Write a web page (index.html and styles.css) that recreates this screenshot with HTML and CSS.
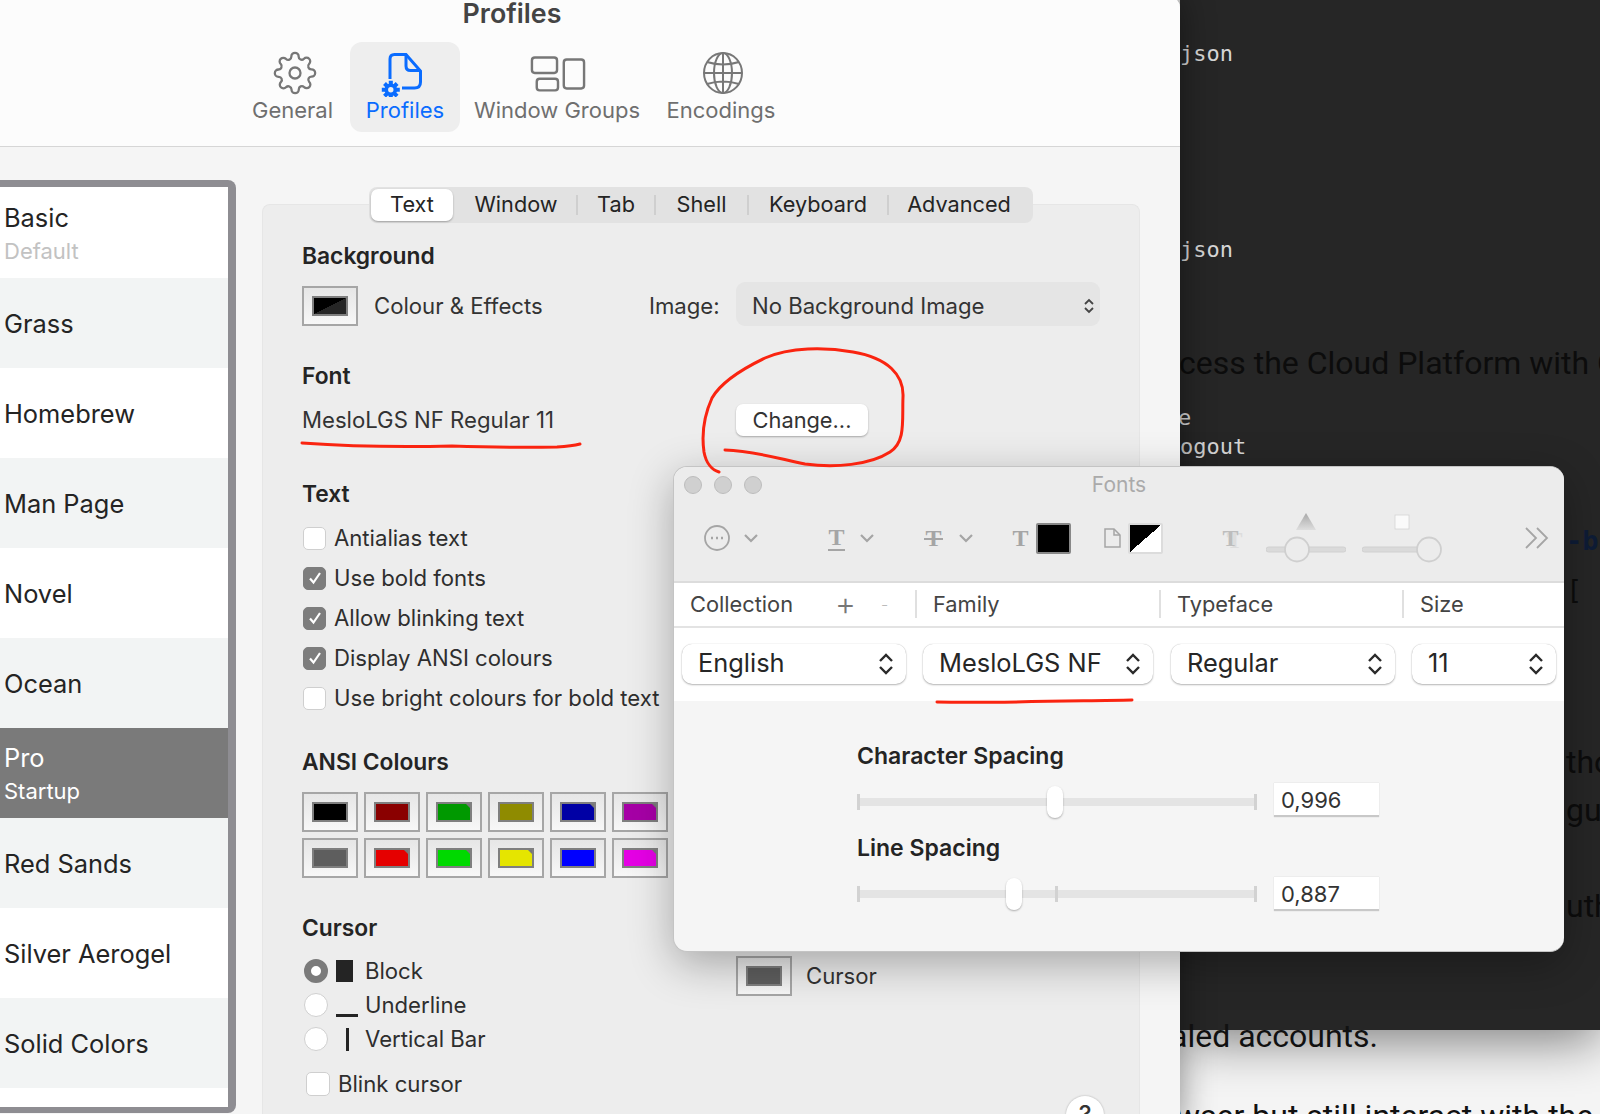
FILE: index.html
```html
<!DOCTYPE html>
<html lang="en">
<head>
  <meta charset="UTF-8">
  <title>Terminal Preferences - Profiles</title>
  <link rel="stylesheet" href="styles.css">
</head>
<body>
  <div class="desktop">
    <!-- terminal behind the windows -->
    <div class="term">
      <div class="term-line line-json1">json</div>
      <div class="term-line line-json2">json</div>
      <div class="term-line line-e">e</div>
      <div class="term-line line-logout">ogout</div>
    </div>

    <!-- page text around the terminal -->
    <div class="doc doc-access">cess the Cloud Platform with G</div>
    <div class="doc doc-tho">tho</div>
    <div class="doc doc-gu">gu</div>
    <div class="doc doc-uth">uth</div>
    <div class="doc doc-br">-br</div>
    <div class="doc doc-bracket">[ -</div>
    <div class="doc doc-sealed">aled accounts.</div>
    <div class="doc doc-power">wser but still interact with the</div>

    <!-- preferences window -->
    <div class="prefs">
      <header class="prefs-top">
        <div class="prefs-title">Profiles</div>
        <nav class="prefs-tools">
          <div class="tool tool-general">
            <svg class="tool-icon" width="44" height="44" viewBox="0 0 24 24" fill="none" stroke="#777" stroke-width="1.25">
              <circle cx="12" cy="12" r="3"/>
              <path d="M19.4 15a1.65 1.65 0 0 0 .33 1.82l.06.06a2 2 0 0 1 0 2.83 2 2 0 0 1-2.83 0l-.06-.06a1.65 1.65 0 0 0-1.82-.33 1.65 1.65 0 0 0-1 1.51V21a2 2 0 0 1-2 2 2 2 0 0 1-2-2v-.09A1.65 1.65 0 0 0 9 19.4a1.65 1.65 0 0 0-1.82.33l-.06.06a2 2 0 0 1-2.83 0 2 2 0 0 1 0-2.83l.06-.06a1.65 1.65 0 0 0 .33-1.82 1.65 1.65 0 0 0-1.51-1H3a2 2 0 0 1-2-2 2 2 0 0 1 2-2h.09A1.65 1.65 0 0 0 4.6 9a1.65 1.65 0 0 0-.33-1.82l-.06-.06a2 2 0 0 1 0-2.83 2 2 0 0 1 2.83 0l.06.06a1.65 1.65 0 0 0 1.82.33H9a1.65 1.65 0 0 0 1-1.51V3a2 2 0 0 1 2-2 2 2 0 0 1 2 2v.09a1.65 1.65 0 0 0 1 1.51 1.65 1.65 0 0 0 1.82-.33l.06-.06a2 2 0 0 1 2.83 0 2 2 0 0 1 0 2.83l-.06.06a1.65 1.65 0 0 0-.33 1.82V9a1.65 1.65 0 0 0 1.51 1H21a2 2 0 0 1 2 2 2 2 0 0 1-2 2h-.09a1.65 1.65 0 0 0-1.51 1z"/>
            </svg>
            <span>General</span>
          </div>
          <div class="tool tool-profiles active">
            <svg class="tool-icon" width="48" height="48" viewBox="0 0 48 48" fill="none">
              <path d="M12 30V10q0-4.5 4.500-4.500H28L42.500 22V33q0 6-6 6H24" stroke="#0a6cff" stroke-width="3"/>
              <path d="M28 5.500V17q0 4.500 4.500 4.500H42.500" stroke="#0a6cff" stroke-width="3"/>
              <g transform="translate(2,30) scale(.9)">
                <path d="M12 2v20M2 12h20M5 5l14 14M19 5L5 19" stroke="#0a6cff" stroke-width="4.500"/>
                <circle cx="12" cy="12" r="7" fill="#0a6cff"/>
                <circle cx="12" cy="12" r="3" fill="#eee"/>
              </g>
            </svg>
            <span>Profiles</span>
          </div>
          <div class="tool tool-groups">
            <svg class="tool-icon" width="58" height="48" viewBox="0 0 58 48" fill="none" stroke="#777" stroke-width="2.500">
              <rect x="2" y="8" width="26" height="16" rx="3"/>
              <rect x="7" y="30" width="22" height="12" rx="3"/>
              <rect x="35" y="10" width="21" height="30" rx="3"/>
            </svg>
            <span>Window Groups</span>
          </div>
          <div class="tool tool-encodings">
            <svg class="tool-icon" width="42" height="44" viewBox="0 0 42 44" fill="none" stroke="#777" stroke-width="2">
              <ellipse cx="21" cy="22" rx="19" ry="20"/>
              <ellipse cx="21" cy="22" rx="9" ry="20"/>
              <path d="M21 2v40M2 22h38M5 11q16 5 32 0M5 33q16-5 32 0"/>
            </svg>
            <span>Encodings</span>
          </div>
        </nav>
      </header>

      <div class="prefs-body">
        <ul class="profile-list">
          <li><span class="p-name">Basic</span><span class="p-sub">Default</span></li>
          <li><span class="p-name">Grass</span></li>
          <li><span class="p-name">Homebrew</span></li>
          <li><span class="p-name">Man Page</span></li>
          <li><span class="p-name">Novel</span></li>
          <li><span class="p-name">Ocean</span></li>
          <li class="selected"><span class="p-name">Pro</span><span class="p-sub">Startup</span></li>
          <li><span class="p-name">Red Sands</span></li>
          <li><span class="p-name">Silver Aerogel</span></li>
          <li><span class="p-name">Solid Colors</span></li>
          <li></li>
        </ul>

        <div class="settings">
          <div class="tabs">
            <span class="tab tab-text current">Text</span>
            <span class="tab tab-window">Window</span>
            <span class="tab-sep"></span>
            <span class="tab tab-tab">Tab</span>
            <span class="tab-sep"></span>
            <span class="tab tab-shell">Shell</span>
            <span class="tab-sep"></span>
            <span class="tab tab-keyboard">Keyboard</span>
            <span class="tab-sep"></span>
            <span class="tab tab-advanced">Advanced</span>
          </div>

          <div class="group">
            <h4>Background</h4>
            <div class="row row-bg">
              <div class="well"><div class="well-in bg-swatch"></div></div>
              <span class="well-label">Colour &amp; Effects</span>
              <span class="image-label">Image:</span>
              <div class="select-flat">
                No Background Image
                <svg class="updown" width="12" height="18" viewBox="0 0 12 18" fill="none" stroke="#444" stroke-width="1.800"><path d="M2 7l4-4 4 4M2 11l4 4 4-4"/></svg>
              </div>
            </div>

            <h4 class="h-font">Font</h4>
            <div class="row row-font">
              <span class="font-name">MesloLGS NF Regular 11</span>
              <button class="btn-change">Change...</button>
            </div>

            <h4 class="h-text">Text</h4>
            <div class="checks">
              <label class="check"><i class="box"></i>Antialias text</label>
              <label class="check"><i class="box on"><svg width="16" height="16" viewBox="0 0 16 16" fill="none" stroke="#fff" stroke-width="2.200"><path d="M3 8.500l3.500 4L13 3"/></svg></i>Use bold fonts</label>
              <label class="check"><i class="box on"><svg width="16" height="16" viewBox="0 0 16 16" fill="none" stroke="#fff" stroke-width="2.200"><path d="M3 8.500l3.500 4L13 3"/></svg></i>Allow blinking text</label>
              <label class="check"><i class="box on"><svg width="16" height="16" viewBox="0 0 16 16" fill="none" stroke="#fff" stroke-width="2.200"><path d="M3 8.500l3.500 4L13 3"/></svg></i>Display ANSI colours</label>
              <label class="check"><i class="box"></i>Use bright colours for bold text</label>
            </div>

            <h4 class="h-ansi">ANSI Colours</h4>
            <div class="ansi">
              <div class="well"><div class="well-in c-black"></div></div>
              <div class="well"><div class="well-in c-maroon"></div></div>
              <div class="well"><div class="well-in c-green notch"></div></div>
              <div class="well"><div class="well-in c-olive"></div></div>
              <div class="well"><div class="well-in c-navy notch"></div></div>
              <div class="well"><div class="well-in c-purple notch"></div></div>
              <div class="well"><div class="well-in c-grey"></div></div>
              <div class="well"><div class="well-in c-red notch"></div></div>
              <div class="well"><div class="well-in c-lime notch"></div></div>
              <div class="well"><div class="well-in c-yellow notch"></div></div>
              <div class="well"><div class="well-in c-blue"></div></div>
              <div class="well"><div class="well-in c-pink notch"></div></div>
            </div>

            <h4 class="h-cursor">Cursor</h4>
            <div class="cursor-sec">
              <div class="cursor-left">
                <label class="radio"><i class="dot on"></i><b class="shape shape-block"></b>Block</label>
                <label class="radio"><i class="dot"></i><b class="shape shape-under"></b>Underline</label>
                <label class="radio"><i class="dot"></i><b class="shape shape-bar"></b>Vertical Bar</label>
                <label class="check blink"><i class="box"></i>Blink cursor</label>
              </div>
              <div class="cursor-right">
                <div class="well"><div class="well-in c-grey"></div></div>
                <span class="well-label">Cursor</span>
              </div>
            </div>
            <div class="help">?</div>
          </div>
        </div>
      </div>
    </div>

    <!-- fonts panel -->
    <div class="fonts">
      <div class="f-title">
        <div class="lights"><i></i><i></i><i></i></div>
        <span>Fonts</span>
      </div>
      <div class="f-tools">
        <div class="ft ft-more">
          <svg width="26" height="26" viewBox="0 0 26 26" fill="none" stroke="#a5a5a5" stroke-width="1.800"><circle cx="13" cy="13" r="12"/><path d="M7 13h2M12 13h2M17 13h2" stroke-width="2.400"/></svg>
          <svg class="chev" width="16" height="10" viewBox="0 0 16 10" fill="none" stroke="#a5a5a5" stroke-width="2.200"><path d="M2 2l6 6 6-6"/></svg>
        </div>
        <div class="ft ft-under">
          <span class="t-glyph t-underline">T</span>
          <svg class="chev" width="16" height="10" viewBox="0 0 16 10" fill="none" stroke="#a5a5a5" stroke-width="2.200"><path d="M2 2l6 6 6-6"/></svg>
        </div>
        <div class="ft ft-strike">
          <span class="t-glyph t-strike">T</span>
          <svg class="chev" width="16" height="10" viewBox="0 0 16 10" fill="none" stroke="#a5a5a5" stroke-width="2.200"><path d="M2 2l6 6 6-6"/></svg>
        </div>
        <div class="ft ft-color">
          <span class="t-glyph">T</span>
          <div class="chip chip-black"></div>
        </div>
        <div class="ft ft-doc">
          <svg width="17" height="20" viewBox="0 0 17 20" fill="none" stroke="#a5a5a5" stroke-width="1.500"><path d="M1 1h9l6 6v12H1z"/><path d="M10 1v6h6"/></svg>
          <div class="chip chip-split"></div>
        </div>
        <div class="ft ft-shadow">
          <span class="t-glyph t-ghost">T</span>
        </div>
        <svg class="ft ft-slide1" width="80" height="50" viewBox="0 0 80 50">
          <defs><linearGradient id="tri" x1="0" y1="0" x2="0" y2="1"><stop offset="0" stop-color="#a8a8a8"/><stop offset="1" stop-color="#dedede"/></linearGradient></defs>
          <path d="M40 0l10 17H30z" fill="url(#tri)"/>
          <rect x="0" y="34" width="80" height="5" rx="2.500" fill="#dadada" stroke="#d0d0d0"/>
          <circle cx="31" cy="36.500" r="12" fill="#ececec" stroke="#cfcfcf" stroke-width="1.800"/>
        </svg>
        <svg class="ft ft-slide2" width="80" height="50" viewBox="0 0 80 50">
          <rect x="33" y="2" width="14" height="14" fill="#fafafa" stroke="#d4d4d4" stroke-width=".8"/>
          <rect x="0" y="34" width="60" height="5" rx="2.500" fill="#dadada" stroke="#d0d0d0"/>
          <circle cx="67" cy="36.500" r="12" fill="#ececec" stroke="#cfcfcf" stroke-width="1.800"/>
        </svg>
        <svg class="ft ft-over" width="24" height="22" viewBox="0 0 24 22" fill="none" stroke="#a5a5a5" stroke-width="1.800"><path d="M1 1l10 10L1 21M12 1l10 10-10 10"/></svg>
      </div>

      <div class="f-head">
        <div class="col col-collection"><span>Collection</span><b class="plus">+</b><b class="minus">-</b></div>
        <div class="col col-family">Family</div>
        <div class="col col-typeface">Typeface</div>
        <div class="col col-size">Size</div>
      </div>

      <div class="f-selects">
        <div class="pop pop-collection"><span class="pop-text">English</span><svg class="updown" width="16" height="24" viewBox="0 0 16 24" fill="none" stroke="#2a2a2a" stroke-width="2.400"><path d="M2 9l6-6 6 6M2 15l6 6 6-6"/></svg></div>
        <div class="pop pop-family"><span class="pop-text">MesloLGS NF</span><svg class="updown" width="16" height="24" viewBox="0 0 16 24" fill="none" stroke="#2a2a2a" stroke-width="2.400"><path d="M2 9l6-6 6 6M2 15l6 6 6-6"/></svg></div>
        <div class="pop pop-typeface"><span class="pop-text">Regular</span><svg class="updown" width="16" height="24" viewBox="0 0 16 24" fill="none" stroke="#2a2a2a" stroke-width="2.400"><path d="M2 9l6-6 6 6M2 15l6 6 6-6"/></svg></div>
        <div class="pop pop-size"><span class="pop-text">11</span><svg class="updown" width="16" height="24" viewBox="0 0 16 24" fill="none" stroke="#2a2a2a" stroke-width="2.400"><path d="M2 9l6-6 6 6M2 15l6 6 6-6"/></svg></div>
      </div>

      <div class="f-spacing">
        <h4>Character Spacing</h4>
        <div class="spacing-row">
          <div class="track track-char"><i class="tick"></i><i class="tick"></i><b class="thumb"></b></div>
          <div class="num">0,996</div>
        </div>
        <h4 class="h-line">Line Spacing</h4>
        <div class="spacing-row">
          <div class="track track-line"><i class="tick"></i><i class="tick tick-mid"></i><i class="tick"></i><b class="thumb"></b></div>
          <div class="num num-line">0,887</div>
        </div>
      </div>
    </div>

    <!-- red marker annotations -->
    <svg class="marks" width="1600" height="1114" viewBox="0 0 1600 1114" fill="none" stroke="#fa2410" stroke-width="3" stroke-linecap="round">
      <path d="M302 443q70 5 150 3 60 2 105 1 15-1 23-3"/>
      <path d="M725 450C755 451 780 459 805 464C835 468 870 465 890 452C906 442 902 420 903 397C904 375 888 358 853 352C825 347 790 347 765 358C740 370 720 384 712 398C703 418 702 438 704 452C706 463 712 470 719 472"/>
      <path d="M937 702c60 1 130-1 195-2"/>
    </svg>
  </div>
</body>
</html>
```

FILE: styles.css
```css
* { box-sizing: border-box; }
html, body { margin: 0; padding: 0; }
body { font-family: Inter, "Noto Sans", sans-serif; color: #242424; }
h4 { margin: 0; font-size: 22.800px; line-height: 26px; font-weight: 600; color: #242424; }
ul { margin: 0; padding: 0; list-style: none; }
i, b { font-style: normal; }

.desktop { position: relative; width: 1600px; height: 1114px; overflow: hidden; background: #f5f5f5; }

/* terminal */
.term { position: absolute; left: 1180px; top: 0; width: 420px; height: 1030px; background: #262626; box-shadow: 0 10px 50px rgba(0,0,0,.5); overflow: hidden; font-family: "DejaVu Sans Mono", monospace; font-size: 22px; line-height: 28px; color: #d6d6d6; }
.term-line { position: absolute; left: 0; white-space: pre; }
.line-json1 { top: 40px; }
.line-json2 { top: 236px; }
.line-e { top: 404px; left: -2px; }
.line-logout { top: 433px; }

/* page text */
.doc { position: absolute; font-family: Roboto, sans-serif; font-size: 32px; line-height: 40px; color: #111; white-space: nowrap; }
.doc-access { top: 343px; left: 1179px; color: #0c0c0c; }
.doc-tho { top: 742px; left: 1566px; color: #0c0c0c; }
.doc-gu { top: 790px; left: 1566px; color: #0c0c0c; }
.doc-uth { top: 886px; left: 1566px; color: #0c0c0c; }
.doc-br { top: 521px; left: 1566px; color: #0e1c36; font-family: "DejaVu Sans Mono", monospace; font-size: 27px; font-weight: 700; }
.doc-bracket { top: 570px; left: 1566px; color: #0c0c0c; font-family: "DejaVu Sans Mono", monospace; font-size: 27px; }
.doc-sealed { top: 1016px; left: 1170px; }
.doc-power { top: 1096px; left: 1176px; }

/* preferences window */
.prefs { position: absolute; left: 0; top: -4px; width: 1180px; height: 1130px; background: #f5f5f5; border-radius: 0 12px 0 0; box-shadow: 0 0 34px rgba(0,0,0,.45); display: flex; flex-direction: column; overflow: hidden; }
.prefs-top { height: 151px; flex: none; background: #fcfcfc; border-bottom: 1px solid #d6d6d6; padding-top: 4px; }
.prefs-title { height: 26px; line-height: 26px; text-align: center; width: 1024px; font-size: 26.800px; font-weight: 600; color: #444; }
.prefs-tools { display: flex; margin-top: 16px; padding-left: 239px; }
.tool { height: 90px; display: flex; flex-direction: column; align-items: center; font-size: 22px; color: #6f6f6f; }
.tool-icon { height: 48px; margin-top: 7px; margin-bottom: -1px; flex: none; }
.tool span { line-height: 28px; }
.tool-general { width: 111px; }
.tool-general span { margin-right: 4px; }
.tool-profiles { width: 110px; }
.tool-profiles .tool-icon { margin-right: 6px; }
.tool-groups { width: 194px; }
.tool-groups .tool-icon { margin-left: 2px; width: 56px; }
.tool-encodings { width: 134px; }
.tool-encodings .tool-icon { margin-left: 4px; }
.active { background: #eeeeee; border-radius: 12px; color: #0a6cff; }

.prefs-body { flex: 1; display: flex; align-items: flex-start; min-height: 0; }

.profile-list { width: 236px; height: 933px; margin-top: 33px; flex: none; border: 8px solid #8e8d92; border-top-width: 7px; border-left: 0; border-bottom-width: 6px; border-radius: 0 8px 8px 0; background: #fff; overflow: hidden; }
.profile-list li { height: 90px; padding: 1px 0 0 4px; display: flex; flex-direction: column; justify-content: center; }
.profile-list li:first-child { height: 91px; padding-top: 2px; }
.profile-list li:nth-child(even) { background: #f2f4f4; }
.p-name { font-size: 25.400px; line-height: 32px; color: #242424; }
.p-sub { font-size: 22px; line-height: 30px; margin-top: 2px; color: #c2c2c2; }
.profile-list .selected { background: #7a7a7a; }
.selected .p-name, .selected .p-sub { color: #fff; }

.settings { margin-left: 26px; width: 878px; padding-top: 40px; position: relative; }
.tabs { display: flex; align-items: center; height: 36px; width: 664px; margin-left: 107px; margin-bottom: -19px; background: #e2e2e2; border-radius: 8px; position: relative; z-index: 1; padding: 2px; font-size: 21.700px; color: #242424; }
.tab { text-align: center; line-height: 31px; padding-bottom: 1px; }
.tab-sep { width: 2px; height: 20px; background: #cfcfcf; flex: none; }
.current { background: #fff; border-radius: 7px; box-shadow: 0 1px 2px rgba(0,0,0,.3); }
.tab-text { width: 82px; }
.tab-window { width: 123px; padding-left: 3px; }
.tab-tab { width: 76px; }
.tab-shell { width: 91px; }
.tab-keyboard { width: 138px; }
.tab-advanced { width: 140px; }

.group { height: 922px; background: #ededed; border: 1px solid #e6e6e6; border-bottom: 0; border-radius: 8px 8px 0 0; padding: 38px 0 0 39px; position: relative; font-size: 22.150px; }

.row { display: flex; align-items: center; }
.row-bg { height: 41px; margin-top: 16px; }
.well { width: 56px; height: 40px; flex: none; border: 2px solid #a6a6a6; background: linear-gradient(#e6e6e6, #f7f7f7); display: flex; align-items: center; justify-content: center; }
.well-in { width: 36px; height: 20px; border: 2px solid #7f7f7f; }
.bg-swatch { background: linear-gradient(to bottom right, #000 50%, #262626 50%); }
.well-label { margin-left: 16px; color: #333; }
.row-bg .well-label { width: 275px; }
.image-label { width: 87px; color: #333; }
.select-flat { width: 364px; height: 44px; margin-top: -3px; background: #e5e5e5; border-radius: 9px; display: flex; align-items: center; justify-content: space-between; padding: 3px 5px 0 16px; color: #333; }

.h-font { margin-top: 37px; }
.row-font { height: 32px; margin-top: 15px; }
.font-name { width: 434px; color: #333; }
.btn-change { width: 132px; height: 32px; padding: 0; border: 0; border-radius: 7px; background: #fff; box-shadow: 0 1px 2px rgba(0,0,0,.3); font: 21.800px Inter, sans-serif; color: #333; }

.h-text { margin-top: 45px; }
.checks { margin-top: 11px; }
.check { display: flex; align-items: center; height: 40px; color: #2e2e2e; }
.box { width: 23px; height: 23px; margin: 0 8px 0 1px; border-radius: 5px; background: #fff; border: 1px solid #cfcfcf; display: flex; align-items: center; justify-content: center; }
.box.on { background: #7d7d7d; border-color: #7d7d7d; }

.h-ansi { margin-top: 31px; }
.ansi { display: grid; grid-template-columns: repeat(6, 56px); grid-auto-rows: 40px; column-gap: 6px; row-gap: 6px; margin-top: 17px; }
.c-black { background: #000; }
.c-maroon { background: #8a0000; }
.c-green { background: #009900; }
.c-olive { background: #8f8b00; }
.c-navy { background: #0000a5; }
.c-purple { background: #a600a6; }
.c-grey { background: #5e5e5e; }
.c-red { background: #e50000; }
.c-lime { background: #00d900; }
.c-yellow { background: #e5e500; }
.c-blue { background: #0000ff; }
.c-pink { background: #e500e5; }
.notch { position: relative; }
.notch::after { content: ""; position: absolute; top: 0; right: 0; border-style: solid; border-width: 0 4px 4px 0; border-color: transparent #777 transparent transparent; }

.h-cursor { margin-top: 37px; }
.cursor-sec { display: flex; margin-top: 13px; }
.cursor-left { width: 434px; flex: none; }
.cursor-right { display: flex; align-items: center; height: 40px; margin-top: 2px; }
.cursor-right .well-label { margin-left: 14px; }
.radio { display: flex; align-items: center; height: 34px; color: #2e2e2e; }
.dot { width: 24px; height: 24px; margin-left: 2px; border-radius: 50%; background: #fff; border: 1px solid #d0d0d0; flex: none; }
.dot.on { border: 7px solid #7a7a7a; }
.shape { width: 29px; height: 24px; margin: 0 0 0 8px; flex: none; display: block; position: relative; }
.shape::after { content: ""; position: absolute; background: #242424; }
.shape-block::after { left: 0; top: 1px; width: 17px; height: 22px; }
.shape-under::after { left: 0; bottom: 0; width: 22px; height: 3px; }
.shape-bar::after { left: 10px; top: 1px; width: 3px; height: 23px; }
.blink { margin: 11px 0 0 3px; height: 34px; }
.blink .box { width: 24px; height: 24px; }

.help { position: absolute; left: 803px; top: 891px; width: 38px; height: 38px; border-radius: 50%; background: #fff; box-shadow: 0 0 2px rgba(0,0,0,.3); text-align: center; font-size: 24px; line-height: 38px; font-weight: 500; color: #333; }

/* fonts panel */
.fonts { position: absolute; left: 673px; top: 466px; width: 891px; height: 486px; background: #f5f5f5; border-radius: 14px; border: 1px solid #c4c4c4; border-width: 1px 0 1px 1px; box-shadow: 0 12px 44px rgba(0,0,0,.3); overflow: hidden; }
.f-title { height: 36px; background: #ececec; position: relative; text-align: center; font-size: 21px; line-height: 36px; color: #aaa; }
.lights { position: absolute; left: 10px; top: 9px; display: flex; gap: 12px; }
.lights i { width: 18px; height: 18px; border-radius: 50%; background: #d0d0d0; border: 1px solid #bcbcbc; }
.f-title span { display: block; }
.f-tools { height: 80px; padding-bottom: 8px; background: #ececec; border-bottom: 2px solid #dcdcdc; display: flex; align-items: center; }
.ft { display: flex; align-items: center; flex: none; }
.ft-more { margin-left: 30px; width: 55px; justify-content: space-between; }
.ft-under { margin-left: 69px; width: 47px; justify-content: space-between; }
.ft-strike { margin-left: 50px; width: 49px; justify-content: space-between; }
.ft-color { margin-left: 38px; width: 59px; justify-content: space-between; }
.ft-doc { margin-left: 33px; width: 59px; justify-content: space-between; }
.ft-shadow { margin-left: 59px; width: 18px; }
.ft-slide1 { margin-left: 26px; }
.ft-slide2 { margin-left: 16px; }
.ft-over { margin-left: 83px; }
.t-glyph { font-family: "Liberation Serif", serif; font-weight: 700; font-size: 24px; line-height: 24px; color: #a5a5a5; position: relative; display: block; width: 17px; text-align: center; }
.t-underline { border-bottom: 2px solid #a5a5a5; }
.t-strike::after { content: ""; position: absolute; left: -1px; right: -1px; top: 12px; height: 2px; background: #a5a5a5; }
.t-ghost { color: #bdbdbd; text-shadow: 4px 2px 0 #dddddd; }
.chip { width: 35px; height: 31px; border-radius: 2px; border: 2px solid #dcdcdc; }
.chip-black { background: #000; border-color: #888; }
.chip-split { background: linear-gradient(to bottom right, #000 50%, #fff 50%); }

.f-head { height: 45px; padding-bottom: 1px; background: #fff; border-bottom: 2px solid #e3e3e3; display: flex; align-items: center; font-size: 21.800px; color: #444; }
.col { height: 28px; line-height: 28px; padding-left: 16px; border-left: 2px solid #e0e0e0; }
.col-collection { width: 241px; border-left: 0; display: flex; align-items: center; }
.col-family { width: 244px; }
.col-typeface { width: 243px; }
.col-size { width: 100px; }
.plus { font-size: 32px; font-weight: 300; color: #777; margin-left: 42px; }
.minus { font-size: 16px; font-weight: 300; color: #bbb; margin-left: 25px; }

.f-selects { height: 73px; background: #fff; padding: 16px 0 0 8px; display: flex; gap: 17px; }
.pop { height: 40px; border-radius: 10px; background: #fff; box-shadow: 0 1px 2px rgba(0,0,0,.28), 0 0 1px rgba(0,0,0,.25); display: flex; align-items: center; justify-content: space-between; padding: 0 12px 0 16px; font-size: 25.400px; color: #262626; }
.pop-text { margin-top: -3px; }
.pop-collection { width: 224px; }
.pop-family { width: 230px; }
.pop-typeface { width: 224px; margin-left: 1px; }
.pop-size { width: 144px; }

.f-spacing { padding: 42px 0 0 183px; }
.h-line { margin-top: 18px; }
.f-spacing h4 { font-size: 23px; }
.spacing-row { display: flex; align-items: center; height: 34px; margin-top: 14px; }
.track { position: relative; width: 400px; height: 8px; background: #e4e4e4; display: flex; align-items: center; justify-content: space-between; margin-top: 4px; }
.tick { width: 3px; height: 16px; background: #d2d2d2; flex: none; }
.tick-mid { position: absolute; left: 198px; top: -4px; }
.thumb { position: absolute; top: -12px; width: 16px; height: 32px; border-radius: 8px; background: #fff; box-shadow: 0 1px 2px rgba(0,0,0,.3); }
.track-char .thumb { left: 190px; }
.track-line .thumb { left: 149px; }
.num { width: 105px; height: 34px; margin-left: 17px; background: #fff; border-bottom: 2px solid #c8c8c8; box-shadow: 0 0 1px rgba(0,0,0,.2); font-size: 22px; line-height: 34px; padding-left: 7px; color: #333; }
.num-line { margin-top: 4px; }

.marks { position: absolute; left: 0; top: 0; pointer-events: none; }
```
